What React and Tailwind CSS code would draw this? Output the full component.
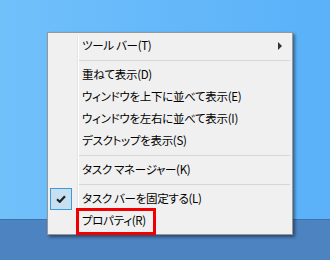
const font = { fontFamily: '"Noto Sans CJK JP", "Noto Sans", sans-serif' };

const Row = ({ label, checked, submenu }) => (
  <div className="flex h-[22px]">
    <div className="w-[28px] shrink-0 border-r border-[#e2e3e3] flex items-center">
      {checked && (
        <div className="w-[22px] h-[22px] border border-[#3b9be0] bg-[#c6e0f2] flex items-center justify-center">
          <svg width="10" height="8" viewBox="0 0 10 8">
            <path d="M1 4.2 L3.8 6.8 L9 1.2" fill="none" stroke="#222" strokeWidth="2.2" />
          </svg>
        </div>
      )}
    </div>
    <div className="flex-1 flex items-center border-l border-white pl-[3px]">
      <span className="text-[11.5px] tracking-[-0.3px] leading-none text-black [font-feature-settings:'palt']">{label}</span>
      {submenu && (
        <span className="ml-auto mr-[8px] w-0 h-0 border-y-[4px] border-y-transparent border-l-[4px] border-l-[#333]" />
      )}
    </div>
  </div>
);

const Separator = () => (
  <div className="flex h-[7px]">
    <div className="w-[28px] shrink-0 border-r border-[#e2e3e3]" />
    <div className="flex-1 flex items-center border-l border-white">
      <div className="w-full h-px bg-[#d7d7d7]" />
    </div>
  </div>
);

export default function App() {
  return (
    <div
      className="w-[330px] h-[260px] overflow-hidden pt-[32px] pl-[47px] bg-[linear-gradient(to_bottom,transparent_0,transparent_219px,#3d72ad_219px,#3d72ad_220px,#4c83c0_220px),linear-gradient(to_right,#70c0fa,#5ab1f9)]"
      style={font}
    >
      <div className="relative w-[246px] h-[203px] border border-[#979797] bg-[#f0f0f0] shadow-[2px_2px_3px_rgba(0,0,0,0.45)] pt-[2px] pl-[2px] pr-[2px]">
        <Row label="ツール バー(T)" submenu />
        <Separator />
        <Row label="重ねて表示(D)" />
        <Row label="ウィンドウを上下に並べて表示(E)" />
        <Row label="ウィンドウを左右に並べて表示(I)" />
        <Row label="デスクトップを表示(S)" />
        <Separator />
        <Row label="タスク マネージャー(K)" />
        <Separator />
        <Row label="タスク バーを固定する(L)" checked />
        <Row label="プロパティ(R)" />
        {/* annotation */}
        <div className="absolute left-[28px] top-[175px] w-[80px] h-[27px] border-[3px] border-[#f00000]" />
      </div>
    </div>
  );
}
